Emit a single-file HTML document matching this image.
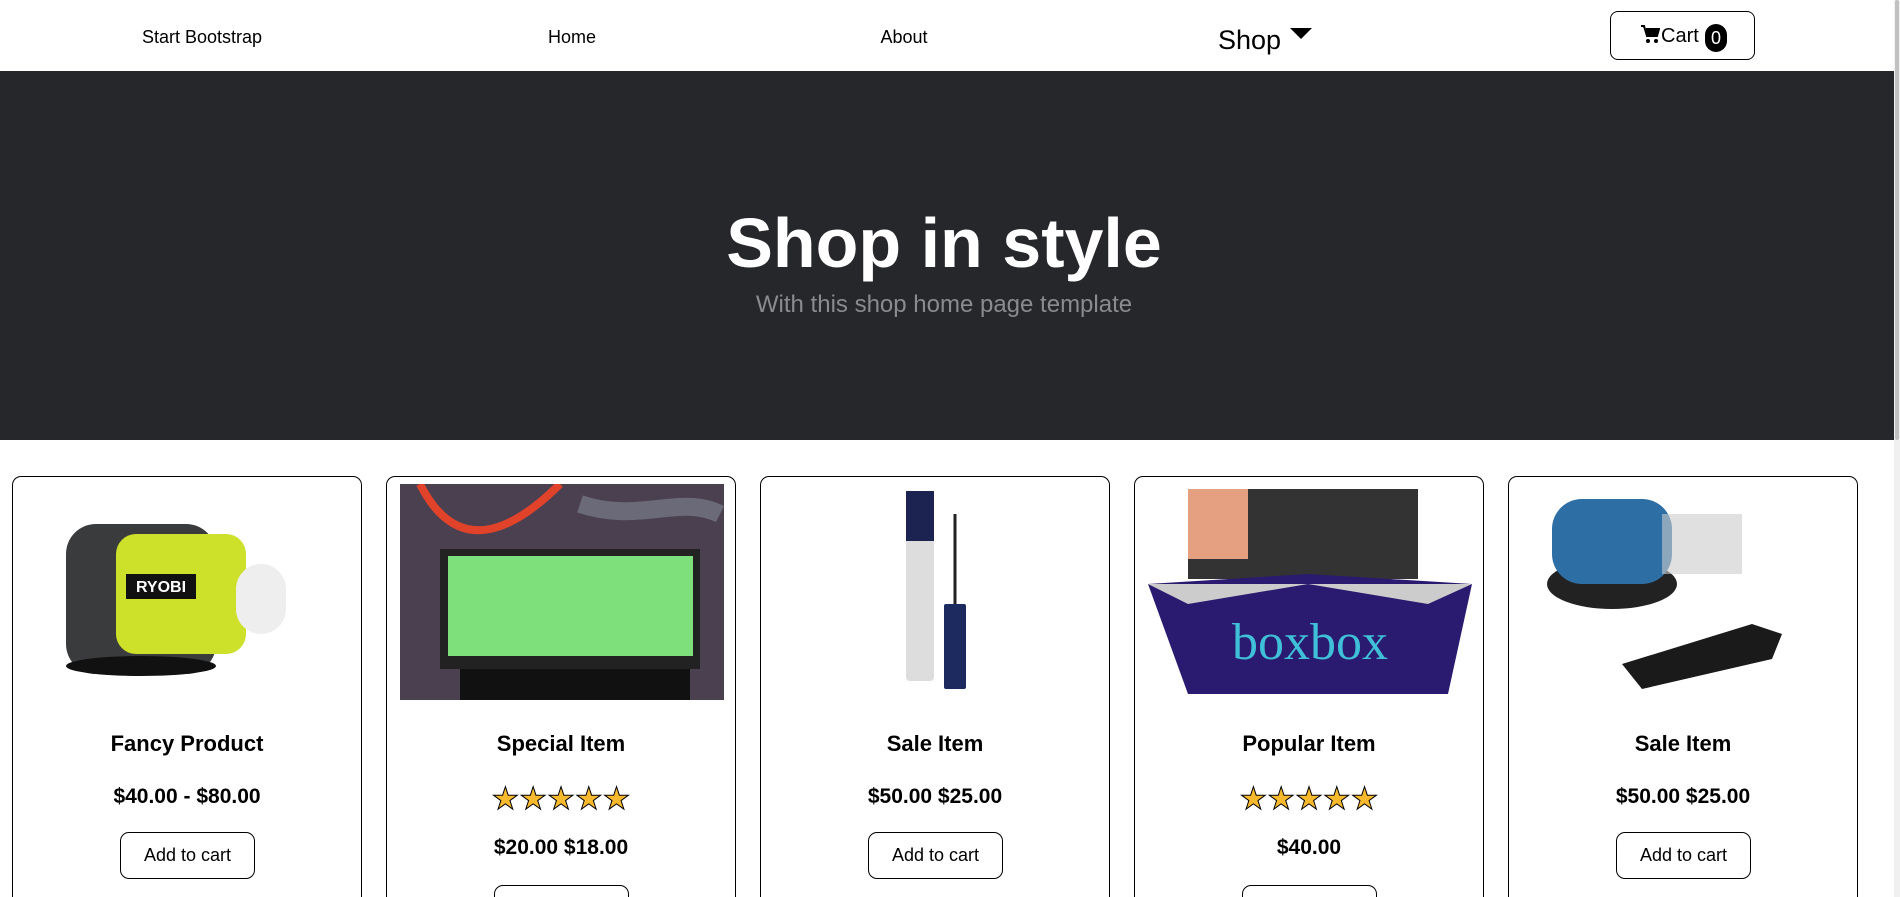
<!DOCTYPE html>
<html><head><meta charset="utf-8"><style>
*{box-sizing:border-box;margin:0;padding:0}
html,body{width:1900px;height:897px;overflow:hidden}
body{background:#fff;font-family:"Liberation Sans",sans-serif;color:#000;position:relative}
.nav{position:absolute;top:0;left:0;width:1894px;height:71px}
.nl{position:absolute;top:27px;font-size:18px;transform:translateX(-50%)}
.shop{position:absolute;left:1218px;top:25px;font-size:27px}
.tri{position:absolute;left:1290px;top:28px;width:0;height:0;border-left:11px solid transparent;border-right:11px solid transparent;border-top:11px solid #000}
.cart{position:absolute;left:1610px;top:11px;width:145px;height:49px;border:1px solid #000;border-radius:8px;font-size:20px}
.ct{position:absolute;left:50px;top:13px}
.badge{position:absolute;left:94px;top:12px;width:22px;height:28px;background:#000;color:#fff;border-radius:11px;font-size:18px;text-align:center;line-height:28px}
.hero{position:absolute;top:71px;left:0;width:1894px;height:369px;background:#26272b;text-align:center}
.hero h1{position:absolute;top:132px;width:100%;font-size:70px;color:#fff;font-weight:bold;left:-3px}
.hero p{position:absolute;top:220px;width:100%;font-size:24px;color:#8a8b8e;left:-3px}
.sb{position:absolute;right:0;top:0;width:6px;height:897px;background:#f0f0f0}
.sb div{position:absolute;top:0;left:1px;width:4px;height:440px;background:#c1c1c1;border-radius:2px}
.card{position:absolute;top:476px;width:350px;height:421px;border:1px solid #000;border-bottom:none;border-radius:9px 9px 0 0;text-align:center;overflow:hidden}
.img{position:absolute;left:13px;top:7px;width:324px;height:216px}
.t{position:absolute;top:254px;width:100%;font-size:22px;font-weight:bold}
.p1{position:absolute;top:308px;width:100%;font-size:21px;font-weight:bold}
.p2{position:absolute;top:359px;width:100%;font-size:21px;font-weight:bold}
.stars{position:absolute;top:304px;width:100%;font-size:31px;color:#f7b92e;-webkit-text-stroke:1px #000}
.btn{position:absolute;left:107px;width:135px;height:47px;border:1px solid #000;border-radius:9px;font-size:18px;line-height:45px}
</style></head><body>
<div class="nav">
<span class="nl" style="left:202px">Start Bootstrap</span>
<span class="nl" style="left:572px">Home</span>
<span class="nl" style="left:904px">About</span>
<div class="shop">Shop</div><div class="tri"></div>
<div class="cart"><svg style="position:absolute;left:29px;top:12px" width="20" height="20" viewBox="0 0 20 20"><path d="M1 2h3l3 10h10l2-7H6" fill="#000" stroke="#000" stroke-width="2"/><circle cx="8" cy="17" r="2"/><circle cx="16" cy="17" r="2"/></svg><span class="ct">Cart</span><div class="badge">0</div></div>
</div>
<div class="hero"><h1>Shop in style</h1><p>With this shop home page template</p></div>
<div class="sb"><div></div></div>

<div class="card" style="left:12px"><svg class="img" viewBox="0 0 324 216"><rect x="40" y="40" width="150" height="150" rx="30" fill="#3a3b3d"/><rect x="90" y="50" width="130" height="120" rx="20" fill="#cde02a"/><rect x="210" y="80" width="50" height="70" rx="25" fill="#eee"/><rect x="100" y="90" width="70" height="25" fill="#111"/><text x="135" y="108" fill="#fff" font-size="16" font-weight="bold" text-anchor="middle" font-family="Liberation Sans">RYOBI</text><ellipse cx="115" cy="182" rx="75" ry="10" fill="#111"/></svg>
<div class="t">Fancy Product</div><div class="p1">$40.00 - $80.00</div><div class="btn" style="top:355px">Add to cart</div></div>

<div class="card" style="left:386px"><svg class="img" viewBox="0 0 324 216"><rect width="324" height="216" fill="#4a4050"/><path d="M20 0 C60 80 120 40 160 0" stroke="#e0422a" stroke-width="8" fill="none"/><path d="M180 20 C240 40 280 10 320 30" stroke="#6a6a78" stroke-width="18" fill="none"/><rect x="40" y="65" width="260" height="120" fill="#222"/><rect x="48" y="72" width="245" height="100" fill="#7ee07a"/><rect x="60" y="185" width="230" height="31" fill="#111"/></svg>
<div class="t">Special Item</div><div class="stars">★★★★★</div><div class="p2">$20.00 $18.00</div><div class="btn" style="top:408px">Add to cart</div></div>

<div class="card" style="left:760px"><svg class="img" viewBox="0 0 324 216"><rect x="132" y="7" width="28" height="190" rx="4" fill="#ddd"/><rect x="132" y="7" width="28" height="50" fill="#1c2350"/><rect x="170" y="120" width="22" height="85" rx="2" fill="#1c2a60"/><line x1="181" y1="30" x2="181" y2="120" stroke="#222" stroke-width="3"/></svg>
<div class="t">Sale Item</div><div class="p1">$50.00 $25.00</div><div class="btn" style="top:355px">Add to cart</div></div>

<div class="card" style="left:1134px"><svg class="img" viewBox="0 0 324 216"><rect x="40" y="5" width="230" height="90" fill="#333"/><rect x="40" y="5" width="60" height="70" fill="#e4a080"/><path d="M0 100 L160 90 L324 100 L300 210 L40 210Z" fill="#2a1a70"/><path d="M0 100 L40 120 L160 100 L280 120 L324 100" fill="#ccc"/><text x="162" y="175" font-size="52" fill="#3fc0d8" text-anchor="middle" font-family="Liberation Serif">boxbox</text></svg>
<div class="t">Popular Item</div><div class="stars">★★★★★</div><div class="p2">$40.00</div><div class="btn" style="top:408px">Add to cart</div></div>

<div class="card" style="left:1508px"><svg class="img" viewBox="0 0 324 216"><ellipse cx="90" cy="100" rx="65" ry="25" fill="#222"/><rect x="30" y="15" width="120" height="85" rx="30" fill="#2d6ea5"/><rect x="140" y="30" width="80" height="60" fill="#ccc" opacity=".6"/><path d="M100 180 L230 140 L260 150 L250 175 L120 205Z" fill="#1a1a1a"/></svg>
<div class="t">Sale Item</div><div class="p1">$50.00 $25.00</div><div class="btn" style="top:355px">Add to cart</div></div>
</body></html>
